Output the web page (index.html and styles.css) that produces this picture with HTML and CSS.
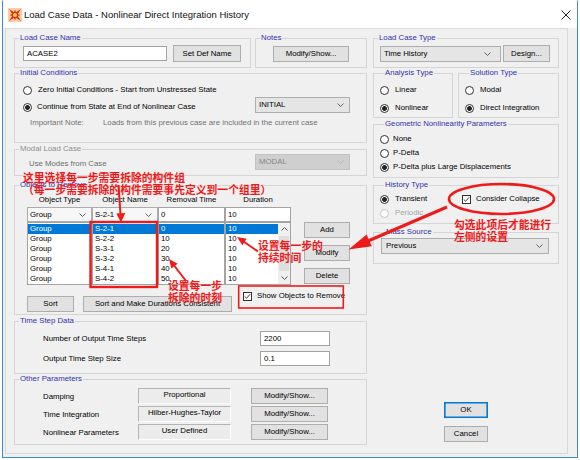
FILE: index.html
```html
<!DOCTYPE html>
<html>
<head>
<meta charset="utf-8">
<link rel="stylesheet" href="styles.css">
</head>
<body>
<div class="stage">
  <div class="window">
    <div class="titlebar">
      <svg class="app-icon" viewBox="0 0 14 14" width="14" height="14">
        <rect width="14" height="14" fill="#fbd0a0"/>
        <path d="M1 1 L6 4.2 L7 1.5 L8 4.2 L13 1 L9.8 6 L12.5 7 L9.8 8 L13 13 L8 9.8 L7 12.5 L6 9.8 L1 13 L4.2 8 L1.5 7 L4.2 6 Z" fill="#e2281b"/>
        <circle cx="7" cy="7" r="2.1" fill="#ffd428"/>
      </svg>
      <span class="title">Load Case Data - Nonlinear Direct Integration History</span>
      <svg class="close" viewBox="0 0 10 10" width="10" height="10"><path d="M0.5 0.5 L9.5 9.5 M9.5 0.5 L0.5 9.5" stroke="#222" stroke-width="1"/></svg>
    </div>
    <div class="client">
      <div class="frame">
        <div class="col-left">
          <div class="row-top">
            <div class="group g-name">
              <div class="legend">Load Case Name</div>
              <div class="name-row">
                <div class="edit name-edit">ACASE2</div>
                <div class="btn btn-defname">Set Def Name</div>
              </div>
            </div>
            <div class="group g-notes">
              <div class="legend">Notes</div>
              <div class="btn btn-notes">Modify/Show...</div>
            </div>
          </div>

          <div class="group g-init">
            <div class="legend">Initial Conditions</div>
            <div class="init-r1">
              <div class="radio"><span class="rb"></span>Zero Initial Conditions - Start from Unstressed State</div>
            </div>
            <div class="init-r2">
              <div class="radio lowered"><span class="rb on"></span>Continue from State at End of Nonlinear Case</div>
              <div class="combo combo-init">INITIAL<svg class="chev" viewBox="0 0 7 4" width="7" height="4"><polyline points="0.5,0.5 3.5,3.5 6.5,0.5" fill="none" stroke="#555" stroke-width="0.9"/></svg></div>
            </div>
            <div class="init-note">
              <span class="note-label">Important Note:</span>
              <span>Loads from this previous case are included in the current case</span>
            </div>
          </div>

          <div class="group g-modal">
            <div class="legend disabled">Modal Load Case</div>
            <div class="modal-row">
              <span class="muted modes-label">Use Modes from Case</span>
              <div class="combo combo-modal">MODAL<svg class="chev" viewBox="0 0 7 4" width="7" height="4"><polyline points="0.5,0.5 3.5,3.5 6.5,0.5" fill="none" stroke="#b5b5b5" stroke-width="0.9"/></svg></div>
            </div>
          </div>

          <div class="group g-obj">
            <div class="legend">Objects to Remove</div>
            <div class="obj-top">
              <div class="obj-table">
                <div class="th">Object Type</div>
                <div class="th">Object Name</div>
                <div class="th">Removal Time</div>
                <div class="th">Duration</div>
                <div class="combo combo-white">Group<svg class="chev" viewBox="0 0 7 4" width="7" height="4"><polyline points="0.5,0.5 3.5,3.5 6.5,0.5" fill="none" stroke="#555" stroke-width="0.9"/></svg></div>
                <div class="combo combo-white">S-2-1<svg class="chev" viewBox="0 0 7 4" width="7" height="4"><polyline points="0.5,0.5 3.5,3.5 6.5,0.5" fill="none" stroke="#555" stroke-width="0.9"/></svg></div>
                <div class="edit">0</div>
                <div class="edit">10</div>
                <div class="list">
                  <div class="li sel">Group</div><div class="li">Group</div><div class="li">Group</div><div class="li">Group</div><div class="li">Group</div><div class="li">Group</div>
                </div>
                <div class="list">
                  <div class="li sel">S-2-1</div><div class="li">S-2-2</div><div class="li">S-3-1</div><div class="li">S-3-2</div><div class="li">S-4-1</div><div class="li">S-4-2</div>
                </div>
                <div class="list">
                  <div class="li sel">0</div><div class="li">10</div><div class="li">20</div><div class="li">30</div><div class="li">40</div><div class="li">50</div>
                </div>
                <div class="list list-scroll">
                  <div class="items">
                    <div class="li sel">10</div><div class="li">10</div><div class="li">10</div><div class="li">10</div><div class="li">10</div><div class="li">10</div>
                  </div>
                  <div class="sb">
                    <div class="sb-btn"><svg viewBox="0 0 7 4" width="7" height="4"><polyline points="0.5,3.5 3.5,0.5 6.5,3.5" fill="none" stroke="#555" stroke-width="1"/></svg></div>
                    <div class="sb-thumb"></div>
                    <div class="sb-btn"><svg viewBox="0 0 7 4" width="7" height="4"><polyline points="0.5,0.5 3.5,3.5 6.5,0.5" fill="none" stroke="#555" stroke-width="1"/></svg></div>
                  </div>
                </div>
              </div>
              <div class="obj-buttons">
                <div class="btn btn-side">Add</div>
                <div class="btn btn-side">Modify</div>
                <div class="btn btn-side">Delete</div>
              </div>
            </div>
            <div class="obj-bottom">
              <div class="btn btn-sort">Sort</div>
              <div class="btn btn-sortmake">Sort and Make Durations Consistent</div>
              <div class="check show-check"><span class="cb"><svg viewBox="0 0 9 9" width="7" height="7"><polyline points="1,4.5 3.3,6.8 8,1.5" fill="none" stroke="#222" stroke-width="1.1"/></svg></span>Show Objects to Remove</div>
            </div>
          </div>

          <div class="group g-time">
            <div class="legend">Time Step Data</div>
            <div class="form-row first">
              <span class="form-label">Number of Output Time Steps</span>
              <div class="edit edit-num">2200</div>
            </div>
            <div class="form-row">
              <span class="form-label">Output Time Step Size</span>
              <div class="edit edit-num">0.1</div>
            </div>
          </div>

          <div class="group g-other">
            <div class="legend">Other Parameters</div>
            <div class="param-row first">
              <span class="param-label">Damping</span>
              <div class="static">Proportional</div>
              <div class="btn btn-param">Modify/Show...</div>
            </div>
            <div class="param-row">
              <span class="param-label">Time Integration</span>
              <div class="static">Hilber-Hughes-Taylor</div>
              <div class="btn btn-param">Modify/Show...</div>
            </div>
            <div class="param-row">
              <span class="param-label">Nonlinear Parameters</span>
              <div class="static">User Defined</div>
              <div class="btn btn-param">Modify/Show...</div>
            </div>
          </div>
        </div>

        <div class="col-right">
          <div class="group g-type">
            <div class="legend">Load Case Type</div>
            <div class="type-row">
              <div class="combo combo-type">Time History<svg class="chev" viewBox="0 0 7 4" width="7" height="4"><polyline points="0.5,0.5 3.5,3.5 6.5,0.5" fill="none" stroke="#555" stroke-width="0.9"/></svg></div>
              <div class="btn btn-design">Design...</div>
            </div>
          </div>

          <div class="row-as">
            <div class="group g-analysis">
              <div class="legend">Analysis Type</div>
              <div class="radio r-first"><span class="rb"></span>Linear</div>
              <div class="radio r-next"><span class="rb on"></span>Nonlinear</div>
            </div>
            <div class="group g-solution">
              <div class="legend">Solution Type</div>
              <div class="radio r-first"><span class="rb"></span>Modal</div>
              <div class="radio r-next"><span class="rb on"></span>Direct Integration</div>
            </div>
          </div>

          <div class="group g-geo">
            <div class="legend">Geometric Nonlinearity Parameters</div>
            <div class="radio geo-first tight"><span class="rb"></span>None</div>
            <div class="radio geo-next tight"><span class="rb"></span>P-Delta</div>
            <div class="radio geo-next tight"><span class="rb on"></span>P-Delta plus Large Displacements</div>
          </div>

          <div class="group g-hist">
            <div class="legend">History Type</div>
            <div class="hist-r1">
              <div class="radio hist-radio"><span class="rb on"></span>Transient</div>
              <div class="check"><span class="cb"><svg viewBox="0 0 9 9" width="7" height="7"><polyline points="1,4.5 3.3,6.8 8,1.5" fill="none" stroke="#222" stroke-width="1.1"/></svg></span>Consider Collapse</div>
            </div>
            <div class="radio hist-r2 disabled-radio"><span class="rb"></span>Periodic</div>
          </div>

          <div class="group g-mass">
            <div class="legend">Mass Source</div>
            <div class="combo combo-mass">Previous<svg class="chev" viewBox="0 0 7 4" width="7" height="4"><polyline points="0.5,0.5 3.5,3.5 6.5,0.5" fill="none" stroke="#555" stroke-width="0.9"/></svg></div>
          </div>

          <div class="btn btn-ok">OK</div>
          <div class="btn btn-cancel">Cancel</div>
        </div>
      </div>
    </div>
  </div>

  <svg class="overlay" viewBox="0 0 580 460" width="580" height="460">
    <g fill="none" stroke="#ee1b1b">
      <rect x="90.5" y="222" width="66.5" height="65" stroke-width="2.4"/>
      <rect x="238.7" y="286" width="104.6" height="22" stroke-width="1.6"/>
      <ellipse cx="501.5" cy="199" rx="52.5" ry="15" stroke-width="2.6"/>
      <line x1="118.5" y1="185" x2="120.5" y2="215" stroke-width="2"/>
      <line x1="258" y1="251.5" x2="243.5" y2="241.5" stroke-width="2"/>
      <line x1="186" y1="281" x2="174.5" y2="266" stroke-width="2"/>
      <line x1="447" y1="207" x2="368" y2="241" stroke-width="3"/>
    </g>
    <g fill="#ee1b1b">
      <polygon points="121,222.5 116.3,213.5 125.3,213"/>
      <polygon points="237,237 242.3,245.3 246.7,238.7"/>
      <polygon points="169,259 171.3,268.6 177.7,263.7"/>
      <polygon points="348.5,249.5 371.8,246.2 366.6,234.6"/>
    </g>
  </svg>
  <div class="note note-group">这里选择每一步需要拆除的构件组<br>（每一步需要拆除的构件需要事先定义到一个组里）</div>
  <div class="note note-duration">设置每一步的<br>持续时间</div>
  <div class="note note-time">设置每一步<br>拆除的时刻</div>
  <div class="note note-collapse">勾选此项后才能进行<br>左侧的设置</div>
</div>
</body>
</html>
```

FILE: styles.css
```css
* { box-sizing: border-box; }

body {
  margin: 0;
  background: #ffffff;
  font-family: "Liberation Sans", Arial, sans-serif;
  font-size: 7.8px;
  line-height: 10px;
  color: #000;
}

.stage {
  position: relative;
  width: 580px;
  height: 460px;
}

.window {
  margin-left: 2px;
  width: 576px;
  height: 458px;
  border: 1px solid #3c8ad8;
  border-top-color: #ffffff;
  background: #fff;
  display: flex;
  flex-direction: column;
}

.titlebar {
  height: 27px;
  flex: none;
  display: flex;
  align-items: center;
  padding-left: 5px;
  background: #fff;
}
.app-icon { flex: none; }
.title {
  margin-left: 2px;
  font-size: 9.5px;
  color: #111;
  white-space: nowrap;
}
.close { margin-left: auto; margin-right: 6px; flex: none; }

.client {
  flex: 1;
  background: #f0f0f0;
  padding: 0 9px 3px 2px;
}
.frame {
  height: 426px;
  border: 1px solid #d9d9d9;
  padding: 9px 8px 8px 8px;
  display: flex;
  gap: 6px;
}
.col-left { width: 353px; display: flex; flex-direction: column; }
.col-right { width: 186px; display: flex; flex-direction: column; }

/* group boxes */
.group {
  border: 1px solid #d5d5d5;
  flex: none;
}
.legend {
  margin: -6px 0 0 4px;
  padding: 0 1px;
  width: max-content;
  height: 10px;
  line-height: 10px;
  background: #f0f0f0;
  color: #3030ae;
  white-space: nowrap;
}
.legend.disabled { color: #8e8e8e; }

/* controls */
.btn {
  background: #e1e1e1;
  border: 1px solid #adadad;
  display: flex;
  align-items: center;
  justify-content: center;
  white-space: nowrap;
  flex: none;
}
.edit {
  background: #fff;
  border: 1px solid #a3a3a3;
  padding-left: 3px;
  display: flex;
  align-items: center;
  white-space: nowrap;
}
.combo {
  background: #e5e5e5;
  border: 1px solid #adadad;
  display: flex;
  align-items: center;
  justify-content: space-between;
  padding: 0 5px 0 3px;
  white-space: nowrap;
  flex: none;
}
.combo-white { background: #f7f7f7; padding-left: 2px; }
.chev { flex: none; }

.radio {
  display: flex;
  align-items: center;
  height: 12px;
  white-space: nowrap;
}
.rb {
  width: 9px;
  height: 9px;
  border: 1px solid #333;
  border-radius: 50%;
  background: #fff;
  margin-right: 6px;
  flex: none;
}
.rb.on { background: radial-gradient(circle, #222 0 2.1px, #fff 2.6px); }
.radio.tight .rb { margin-right: 4px; }
.disabled-radio { color: #a6a6a6; }
.disabled-radio .rb { border-color: #c4c4c4; }

.check {
  display: flex;
  align-items: center;
  height: 12px;
  white-space: nowrap;
}
.cb {
  width: 9px;
  height: 9px;
  border: 1px solid #333;
  background: #fff;
  margin-right: 5px;
  display: flex;
  align-items: center;
  justify-content: center;
  flex: none;
}

.muted { color: #6e6e6e; }

/* Load case name + notes */
.row-top { display: flex; gap: 4px; }
.g-name { width: 237px; height: 30px; }
.g-notes { width: 112px; height: 30px; }
.name-row {
  margin-top: 2px;
  height: 17px;
  padding-left: 8px;
  display: flex;
  align-items: center;
  gap: 6px;
}
.name-edit { width: 144px; height: 15px; }
.btn-defname { width: 68px; height: 17px; }
.btn-notes { width: 76px; height: 16px; margin: 3px 0 0 17px; }

/* initial conditions */
.g-init { height: 70px; margin-top: 5px; }
.init-r1 { margin-top: 6px; padding-left: 8px; }
.init-r2 {
  margin-top: 1px;
  height: 16px;
  padding: 0 16px 0 8px;
  display: flex;
  justify-content: space-between;
  align-items: flex-start;
}
.radio.lowered { margin-top: 4px; }
.radio.lowered .rb { margin-right: 5px; }
.combo-init { width: 95px; height: 16px; }
.init-note {
  margin-top: 5px;
  padding-left: 15px;
  display: flex;
  color: #707070;
  white-space: nowrap;
}
.note-label { width: 73px; flex: none; }

/* modal */
.g-modal { height: 27px; margin-top: 6px; }
.modal-row {
  height: 16px;
  padding: 0 16px 0 14px;
  display: flex;
  justify-content: space-between;
  align-items: center;
}
.modes-label { margin-top: 3px; }
.combo-modal {
  width: 95px;
  height: 16px;
  background: #cfcfcf;
  border-color: #c2c2c2;
  color: #858585;
}

/* objects to remove */
.g-obj { height: 130px; margin-top: 9px; }
.obj-top {
  margin-top: 5px;
  padding-left: 12px;
  display: flex;
}
.obj-table {
  display: grid;
  grid-template-columns: 65px 66px 67px 66px;
  grid-template-rows: 12px 15px 63px;
}
.th { text-align: center; line-height: 10px; height: 10px; white-space: nowrap; }
.obj-table .combo, .obj-table .edit { height: 15px; }
.obj-table .edit { padding-left: 2px; }
.list {
  background: #fff;
  border: 1px solid #a3a3a3;
  padding-top: 1px;
}
.li {
  height: 10px;
  line-height: 10px;
  padding-left: 2px;
  white-space: nowrap;
}
.li.sel { background: #0078d7; color: #fff; }
.list-scroll { display: flex; padding-top: 0; }
.list-scroll .items { flex: 1; padding-top: 1px; }
.sb {
  width: 12px;
  background: #f0f0f0;
  display: flex;
  flex-direction: column;
}
.sb-btn {
  height: 12px;
  display: flex;
  align-items: center;
  justify-content: center;
  flex: none;
}
.sb-thumb { flex: 1; margin: 1px 1px; background: #dedede; }
.obj-buttons {
  margin: 27px 0 0 13px;
  display: flex;
  flex-direction: column;
  gap: 7px;
}
.btn-side { width: 46px; height: 16px; }
.obj-bottom {
  margin-top: 5px;
  padding-left: 12px;
  display: flex;
  align-items: flex-start;
}
.btn-sort { width: 47px; height: 16px; margin-top: 6px; }
.btn-sortmake { width: 149px; height: 16px; margin: 6px 0 0 9px; }
.show-check { margin-left: 11px; }
.show-check .cb { margin-top: 1px; margin-right: 5px; }

/* time step data */
.g-time { height: 53px; margin-top: 6px; }
.form-row {
  margin-top: 5px;
  height: 15px;
  padding-left: 28px;
  display: flex;
  align-items: center;
}
.form-label { width: 217px; flex: none; }
.edit-num { width: 70px; height: 15px; }

/* other parameters */
.g-other { height: 66px; margin-top: 5px; }
.param-row {
  margin-top: 2px;
  height: 16px;
  padding-left: 28px;
  display: flex;
  align-items: center;
}
.param-row.first { margin-top: 4px; }
.param-label { width: 95px; flex: none; margin-top: 2px; }
.static {
  width: 93px;
  height: 16px;
  border: 1px solid;
  border-color: #b4b4b4 #fdfdfd #fdfdfd #b4b4b4;
  background: #ececec;
  text-align: center;
  line-height: 12px;
  white-space: nowrap;
  flex: none;
}
.btn-param { width: 77px; height: 16px; margin-left: 20px; }

/* right column */
.g-type { height: 30px; }
.type-row {
  margin-top: 2px;
  height: 17px;
  padding-left: 6px;
  display: flex;
  align-items: center;
  gap: 2px;
}
.combo-type { width: 121px; height: 16px; padding-right: 9px; }
.btn-design { width: 47px; height: 17px; }

.row-as { display: flex; gap: 5px; margin-top: 5px; }
.g-analysis { width: 80px; height: 45px; padding-left: 6px; }
.g-solution { width: 101px; height: 45px; padding-left: 6px; }
.r-first { margin-top: 6px; }
.r-next { margin-top: 6px; }

.g-geo { height: 54px; margin-top: 6px; padding-left: 6px; }
.geo-first { margin-top: 4px; }
.geo-next { margin-top: 2px; }

.g-hist { height: 39px; margin-top: 7px; padding-left: 6px; }
.hist-r1 { margin-top: 3px; display: flex; align-items: center; }
.hist-radio { width: 82px; flex: none; }
.hist-r2 { margin-top: 2px; }

.g-mass { height: 32px; margin-top: 8px; padding-left: 7px; }
.combo-mass { width: 168px; height: 16px; margin-top: 1px; padding-left: 4px; }

.btn-ok {
  width: 44px;
  height: 16px;
  margin-top: auto;
  align-self: center;
  border-color: #0078d7;
  box-shadow: inset 0 0 0 0.6px #0078d7;
}
.btn-cancel {
  width: 44px;
  height: 16px;
  margin: 8px 0 3px 0;
  align-self: center;
}

/* annotations */
.overlay {
  position: absolute;
  left: 0;
  top: 0;
  pointer-events: none;
}
.note {
  position: absolute;
  color: #f01818;
  font-family: "Noto Sans CJK SC", "Noto Sans CJK JP", sans-serif;
  font-size: 10.8px;
  line-height: 12px;
  font-weight: 700;
  white-space: nowrap;
}
.note-group { left: 23px; top: 171px; }
.note-duration { left: 258px; top: 239px; }
.note-time { left: 168px; top: 279px; }
.note-collapse { left: 454px; top: 218px; }
```
